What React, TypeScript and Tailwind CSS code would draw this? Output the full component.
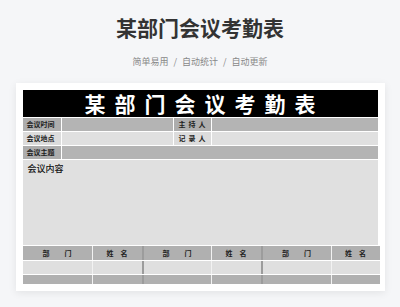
const font = { fontFamily: '"Noto Sans CJK SC", "Noto Sans", sans-serif' };

function Chars({ text, gap }: { text: string; gap: string }) {
  return (
    <div className={`flex items-center justify-center ${gap}`}>
      {text.split("").map((c, i) => (
        <span key={i}>{c}</span>
      ))}
    </div>
  );
}

export default function App() {
  const groups = [
    { dept: "w-[69px]", name: "w-[49px]" },
    { dept: "w-[67px]", name: "w-[49px]" },
    { dept: "w-[68px]", name: "w-[48px]" },
  ];

  const tableRow = (bg: string, h: string, header: boolean) => (
    <div className={`flex ${h}`}>
      {groups.map((g, i) => (
        <div key={i} className="flex">
          {i > 0 && <div className="w-[2px] bg-[#9c9c9c]" />}
          <div
            className={`${g.dept} ${bg} flex items-center justify-center text-[7px] font-bold leading-none text-[#222]`}
          >
            {header && <Chars text="部门" gap="gap-[15px]" />}
          </div>
          <div className="w-px bg-[#f2f2f2]" />
          <div
            className={`${g.name} ${bg} flex items-center justify-center text-[7px] font-bold leading-none text-[#222]`}
          >
            {header && <Chars text="姓名" gap="gap-[7px]" />}
          </div>
        </div>
      ))}
    </div>
  );

  return (
    <div
      className="w-[400px] h-[307px] overflow-hidden bg-[#f5f6f8] flex flex-col items-center"
      style={font}
    >
      <h1 className="mt-[17px] text-[21px] leading-[21px] font-bold text-[#333]">
        某部门会议考勤表
      </h1>
      <div className="mt-[18px] flex items-center gap-[5px] text-[9px] leading-[12px] text-[#888]">
        <span>简单易用</span>
        <span>/</span>
        <span>自动统计</span>
        <span>/</span>
        <span>自动更新</span>
      </div>

      <div className="mt-[15px] w-[369px] h-[208px] bg-white p-[7px] shadow-[0_2px_8px_rgba(0,0,0,0.08)]">
        <div className="flex flex-col gap-px">
          <div className="h-[27px] bg-black flex items-center justify-center text-white text-[21px] font-bold leading-none tracking-[9px] pl-[9px]">
            某部门会议考勤表
          </div>

          <div className="flex h-[13px] gap-px text-[7px] font-bold leading-none text-[#222]">
            <div className="w-[38px] bg-[#adadad] flex items-center pl-[4px]">会议时间</div>
            <div className="w-[111px] bg-[#b4b4b4]" />
            <div className="w-[37px] bg-[#adadad] flex items-center justify-center">
              <Chars text="主持人" gap="gap-[3px]" />
            </div>
            <div className="flex-1 bg-[#b4b4b4]" />
          </div>

          <div className="flex h-[13px] gap-px text-[7px] font-bold leading-none text-[#222]">
            <div className="w-[38px] bg-[#dcdcdc] flex items-center pl-[4px]">会议地点</div>
            <div className="w-[111px] bg-[#e0e0e0]" />
            <div className="w-[37px] bg-[#dcdcdc] flex items-center justify-center">
              <Chars text="记录人" gap="gap-[3px]" />
            </div>
            <div className="flex-1 bg-[#e0e0e0]" />
          </div>

          <div className="flex h-[13px] gap-px text-[7px] font-bold leading-none text-[#222]">
            <div className="w-[38px] bg-[#adadad] flex items-center pl-[4px]">会议主题</div>
            <div className="flex-1 bg-[#b4b4b4]" />
          </div>

          <div className="h-[85px] bg-[#e0e0e0] pl-[5px] pt-[3px] text-[9px] leading-[12px] font-medium text-[#111]">
            会议内容
          </div>

          {tableRow("bg-[#b0b0b0]", "h-[14px]", true)}
          {tableRow("bg-[#dfdfdf]", "h-[13px]", false)}
          {tableRow("bg-[#b0b0b0]", "h-[9px]", false)}
        </div>
      </div>
    </div>
  );
}
